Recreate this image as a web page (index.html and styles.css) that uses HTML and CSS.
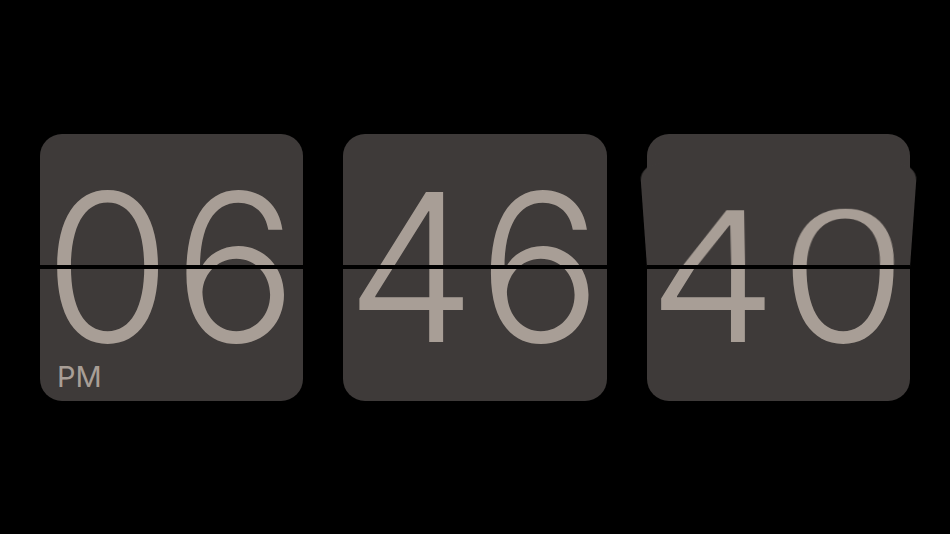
FILE: index.html
```html
<!DOCTYPE html>
<html lang="en">
<head>
<meta charset="utf-8">
<title>Flip Clock</title>
<link rel="stylesheet" href="styles.css">
</head>
<body>
<main class="clock">
  <div class="card">
    <div class="digits">06</div>
    <span class="ampm">PM</span>
    <div class="divider"></div>
  </div>
  <div class="card">
    <div class="digits">46</div>
    <div class="divider"></div>
  </div>
  <div class="card flipping">
    <div class="digits">40</div>
    <div class="flap">
      <div class="flap-inner"><div class="digits">40</div></div>
    </div>
    <div class="divider"></div>
  </div>
</main>
</body>
</html>
```

FILE: styles.css
```css
html, body {
  margin: 0;
  padding: 0;
  background: #000;
  height: 100%;
}

.clock {
  height: 534px;
  box-sizing: border-box;
  padding: 0 40px;
  display: flex;
  align-items: center;
  gap: 40px;
}

.card {
  flex: 1 1 0;
  min-width: 0;
  height: 267px;
  background: #3e3a39;
  border-radius: 22px;
  position: relative;
  display: flex;
  align-items: center;
  justify-content: center;
  perspective: 1650px;
}

.digits {
  font-family: "Inter", "Liberation Sans", sans-serif;
  font-weight: 350;
  font-size: 206px;
  line-height: 1;
  color: #a89e96;
  letter-spacing: 2px;
  white-space: nowrap;
}

.ampm {
  position: absolute;
  left: 17px;
  bottom: 10px;
  font-family: "Inter", "Liberation Sans", sans-serif;
  font-weight: 400;
  font-size: 29px;
  line-height: 1;
  color: #a89e96;
}

.divider {
  position: absolute;
  left: 0;
  right: 0;
  top: 131px;
  height: 4px;
  background: #000;
}

.flap {
  position: absolute;
  left: 0;
  right: 0;
  top: 0;
  height: 133px;
  overflow: hidden;
  background: #3e3a39;
  border-radius: 22px 22px 0 0;
  transform-origin: 50% 100%;
  transform: rotateX(-42deg);
}

.flap-inner {
  height: 267px;
  display: flex;
  align-items: center;
  justify-content: center;
}
```
